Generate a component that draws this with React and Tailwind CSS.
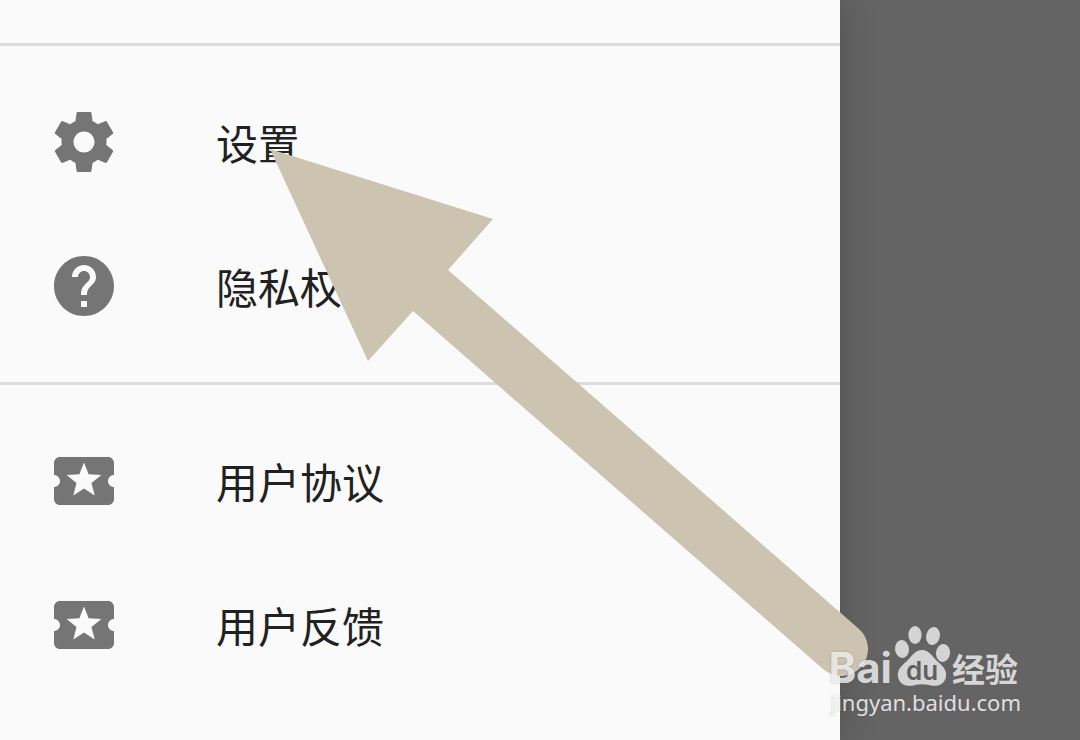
const settingsPath =
  "M19.43 12.98c.04-.32.07-.64.07-.98s-.03-.66-.07-.98l2.11-1.65c.19-.15.24-.42.12-.64l-2-3.46c-.12-.22-.39-.3-.61-.22l-2.49 1c-.52-.4-1.08-.73-1.69-.98l-.38-2.65C14.46 2.18 14.25 2 14 2h-4c-.25 0-.46.18-.49.42l-.38 2.65c-.61.25-1.17.59-1.69.98l-2.49-1c-.23-.09-.49 0-.61.22l-2 3.46c-.13.22-.07.49.12.64l2.11 1.65c-.04.32-.07.65-.07.98s.03.66.07.98l-2.11 1.65c-.19.15-.24.42-.12.64l2 3.46c.12.22.39.3.61.22l2.49-1c.52.4 1.08.73 1.69.98l.38 2.65c.03.24.24.42.49.42h4c.25 0 .46-.18.49-.42l.38-2.65c.61-.25 1.17-.59 1.69-.98l2.49 1c.23.09.49 0 .61-.22l2-3.46c.12-.22.07-.49-.12-.64l-2.11-1.65zM12 15.5c-1.93 0-3.5-1.57-3.5-3.5s1.57-3.5 3.5-3.5 3.5 1.57 3.5 3.5-1.57 3.5-3.5 3.5z";
const helpPath =
  "M12 2C6.48 2 2 6.48 2 12s4.48 10 10 10 10-4.48 10-10S17.52 2 12 2zm1 17h-2v-2h2v2zm2.07-7.75l-.9.92C13.45 12.9 13 13.5 13 15h-2v-.5c0-1.1.45-2.1 1.17-2.83l1.24-1.26c.37-.36.59-.86.59-1.41 0-1.1-.9-2-2-2s-2 .9-2 2H8c0-2.21 1.79-4 4-4s4 1.79 4 4c0 .88-.36 1.68-.93 2.25z";
const ticketPath =
  "M20 12c0-1.1.9-2 2-2V6c0-1.1-.9-2-2-2H4c-1.1 0-2 .9-2 2v4c1.1 0 2 .9 2 2s-.9 2-2 2v4c0 1.1.9 2 2 2h16c1.1 0 2-.9 2-2v-4c-1.1 0-2-.9-2-2zm-4.42 4.8L12 14.5l-3.58 2.3 1.08-4.12-3.29-2.69 4.24-.25L12 5.8l1.54 3.95 4.24.25-3.29 2.69 1.09 4.11z";

const groups = [
  [
    { label: "设置", path: settingsPath },
    { label: "隐私权", path: helpPath },
  ],
  [
    { label: "用户协议", path: ticketPath },
    { label: "用户反馈", path: ticketPath },
  ],
];

function MenuItem({ label, path }) {
  return (
    <li>
      <button
        type="button"
        className="flex h-36 w-full items-center gap-24 px-12 text-left text-[42px] leading-none text-[#212121]"
      >
        <svg viewBox="0 0 24 24" className="size-[72px] shrink-0 fill-[#757575]" aria-hidden="true">
          <path d={path} />
        </svg>
        <span>{label}</span>
      </button>
    </li>
  );
}

function Pointer() {
  return (
    <svg
      className="pointer-events-none absolute top-[149px] left-[270px] h-[530px] w-[600px]"
      viewBox="270 149 600 530"
      aria-hidden="true"
    >
      <path d="M430 290L841 649" stroke="#ccc4b0" strokeWidth="54" strokeLinecap="round" />
      <path d="M270 149L493 219L448 270L413 311L368 361Z" fill="#ccc4b0" />
    </svg>
  );
}

function Watermark() {
  return (
    <div className="absolute right-[59px] bottom-6 flex flex-col items-end text-white/75 [text-shadow:0_0_2px_rgba(80,80,80,0.4)]">
      <div className="flex items-end gap-[2px] pr-[3px]">
        <span className="font-['Inter',sans-serif] text-[42px] leading-10 font-bold">Bai</span>
        <svg viewBox="0 0 56 62" className="h-[62px] w-14" fill="#d4d4d4" aria-hidden="true">
          <ellipse cx="8" cy="23" rx="7" ry="9" transform="rotate(-6 8 23)" />
          <ellipse cx="21" cy="9" rx="6.6" ry="9" />
          <ellipse cx="39" cy="10" rx="6.8" ry="9.2" transform="rotate(12 39 10)" />
          <ellipse cx="49" cy="27" rx="7" ry="9" transform="rotate(6 49 27)" />
          <path d="M28 24C35 24 38 30 43 35C49 40 53 44 52 51C50 60 41 61 35 59C30 58 26 58 21 59C15 61 6 60 4 51C3 44 7 40 13 35C18 30 21 24 28 24Z" />
          <text
            x="28"
            y="54"
            textAnchor="middle"
            fill="#606060"
            className="font-['Inter',sans-serif] text-[26px] font-semibold [text-shadow:none]"
          >
            du
          </text>
        </svg>
        <span className="text-[33px] leading-10 font-bold">经验</span>
      </div>
      <span className="font-['Noto_Sans',sans-serif] text-[22px] leading-7 text-white/80">
        jingyan.baidu.com
      </span>
    </div>
  );
}

export default function App() {
  return (
    <div className="relative flex min-h-screen overflow-hidden bg-[#646464] font-['Noto_Sans_CJK_SC',sans-serif]">
      <nav className="w-7/9 bg-[#fafafa] pt-[43px] shadow-[0_0_36px_rgba(0,0,0,0.2)]">
        {groups.map((items) => (
          <ul key={items[0].label} className="border-t-3 border-[#dcdcdc] py-6">
            {items.map((item) => (
              <MenuItem key={item.label} {...item} />
            ))}
          </ul>
        ))}
      </nav>
      <Pointer />
      <Watermark />
    </div>
  );
}
